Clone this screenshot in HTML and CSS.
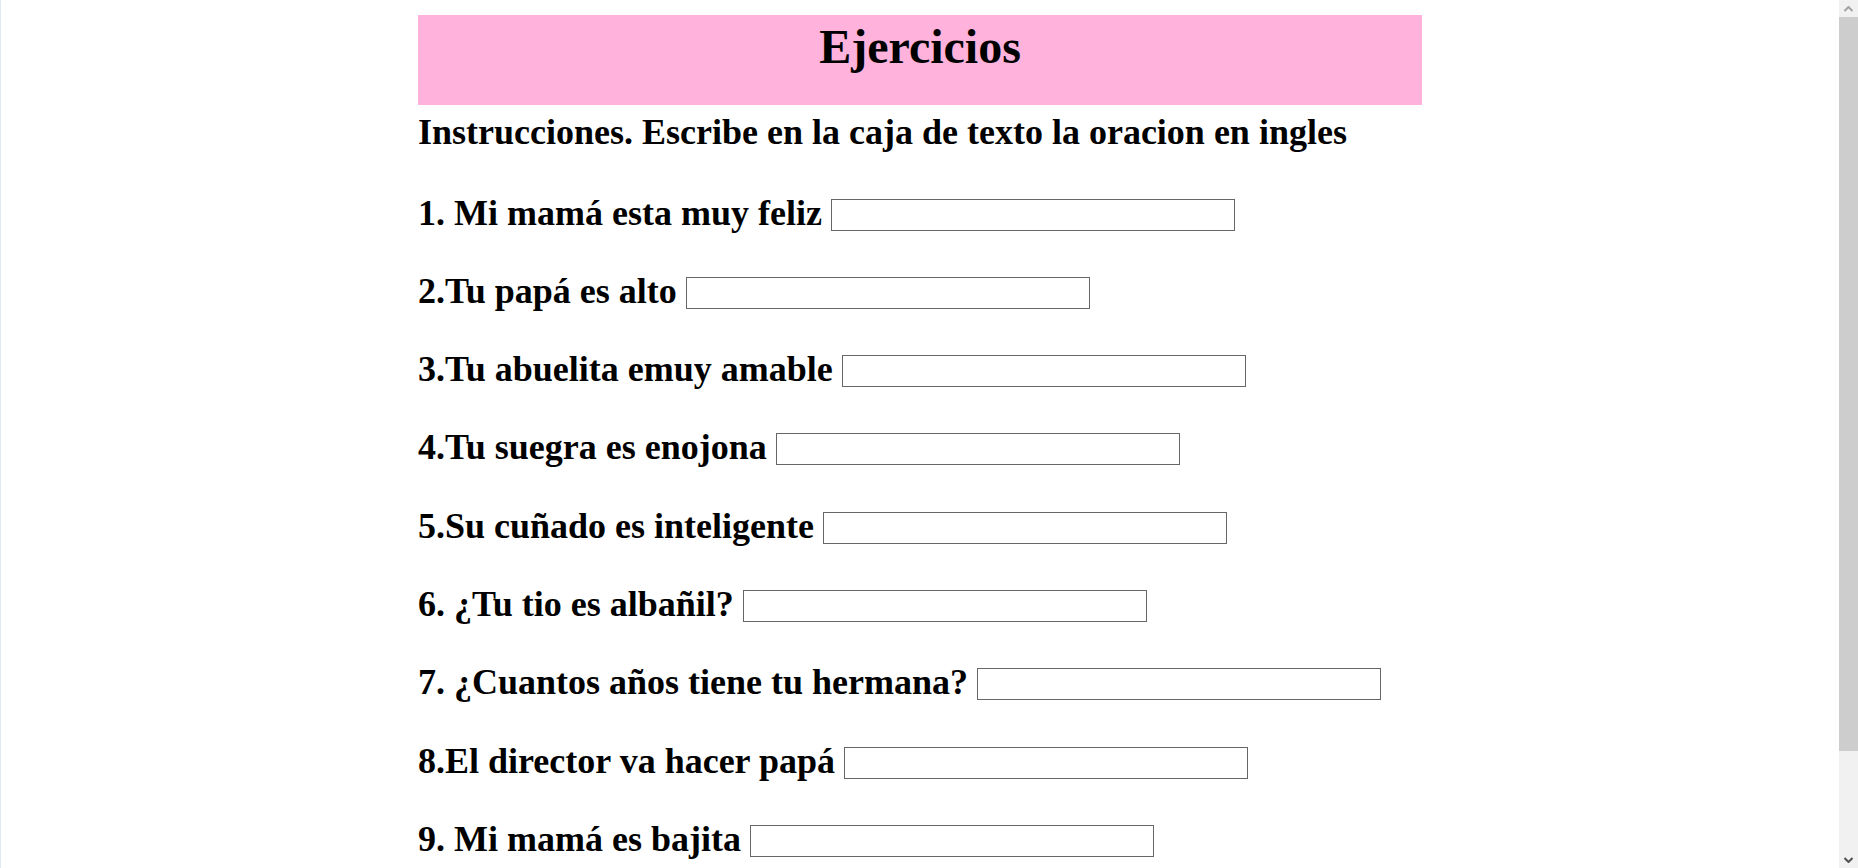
FILE: index.html
```html
<!DOCTYPE html>
<html lang="es">
<head>
<meta charset="utf-8">
<title>Ejercicios</title>
<link rel="stylesheet" href="styles.css">
</head>
<body>
<main class="page">
  <header class="banner">
    <h1 class="title">Ejercicios</h1>
  </header>
  <h2 class="instr">Instrucciones. Escribe en la caja de texto la oracion en ingles</h2>
  <form class="list">
    <p class="item">1. Mi mamá esta muy feliz <input class="answer" type="text"></p>
    <p class="item">2.Tu papá es alto <input class="answer" type="text"></p>
    <p class="item">3.Tu abuelita emuy amable <input class="answer" type="text"></p>
    <p class="item">4.Tu suegra es enojona <input class="answer" type="text"></p>
    <p class="item">5.Su cuñado es inteligente <input class="answer" type="text"></p>
    <p class="item">6. ¿Tu tio es albañil? <input class="answer" type="text"></p>
    <p class="item">7. ¿Cuantos años tiene tu hermana? <input class="answer" type="text"></p>
    <p class="item">8.El director va hacer papá <input class="answer" type="text"></p>
    <p class="item">9. Mi mamá es bajita <input class="answer" type="text"></p>
  </form>
</main>
<div class="scrollbar" aria-hidden="true">
  <div class="sb-btn">
    <svg width="9" height="6" viewBox="0 0 9 6"><path d="M0.5 5 L4.5 1 L8.5 5" fill="none" stroke="#a3a3a3" stroke-width="2"/></svg>
  </div>
  <div class="sb-track">
    <div class="sb-thumb"></div>
  </div>
  <div class="sb-btn">
    <svg width="9" height="6" viewBox="0 0 9 6"><path d="M0.5 1 L4.5 5 L8.5 1" fill="none" stroke="#505050" stroke-width="2"/></svg>
  </div>
</div>
</body>
</html>
```
FILE: styles.css
```css
html {
  background: #ffffff;
}
body {
  margin: 0;
  padding-right: 19px;
  border-left: 1px solid #e3e9f1;
  font-family: "Liberation Serif", "Times New Roman", serif;
  color: #000;
}
.page {
  width: 1004px;
  margin: 0 auto;
  padding: 15px 0 110px;
}
.banner {
  background: #ffb2dc;
  height: 90px;
  padding-top: 4px;
  box-sizing: border-box;
}
.title {
  margin: 0;
  font-size: 48px;
  line-height: 55px;
  font-weight: bold;
  text-align: center;
}
.instr {
  margin: 5px 0 36.5px;
  font-size: 36px;
  line-height: 44px;
  font-weight: bold;
}
.list {
  margin: 0;
}
.item {
  margin: 0 0 34.33px;
  font-size: 36px;
  line-height: 44px;
  font-weight: bold;
  white-space: nowrap;
}
.answer {
  box-sizing: border-box;
  width: 404px;
  height: 32px;
  margin: 0;
  padding: 0 3px;
  border: 1px solid #666666;
  font-family: "Liberation Sans", Arial, sans-serif;
  font-size: 20px;
  vertical-align: 3.5px;
  background: #fff;
}
.scrollbar {
  position: fixed;
  top: 0;
  right: 0;
  bottom: 0;
  width: 19px;
  background: #f1f1f1;
  display: flex;
  flex-direction: column;
}
.sb-btn {
  height: 17px;
  display: flex;
  align-items: center;
  justify-content: center;
  flex: none;
}
.sb-track {
  flex: 1;
  display: flex;
  flex-direction: column;
}
.sb-thumb {
  height: 734px;
  background: #cdcdcd;
}
```
